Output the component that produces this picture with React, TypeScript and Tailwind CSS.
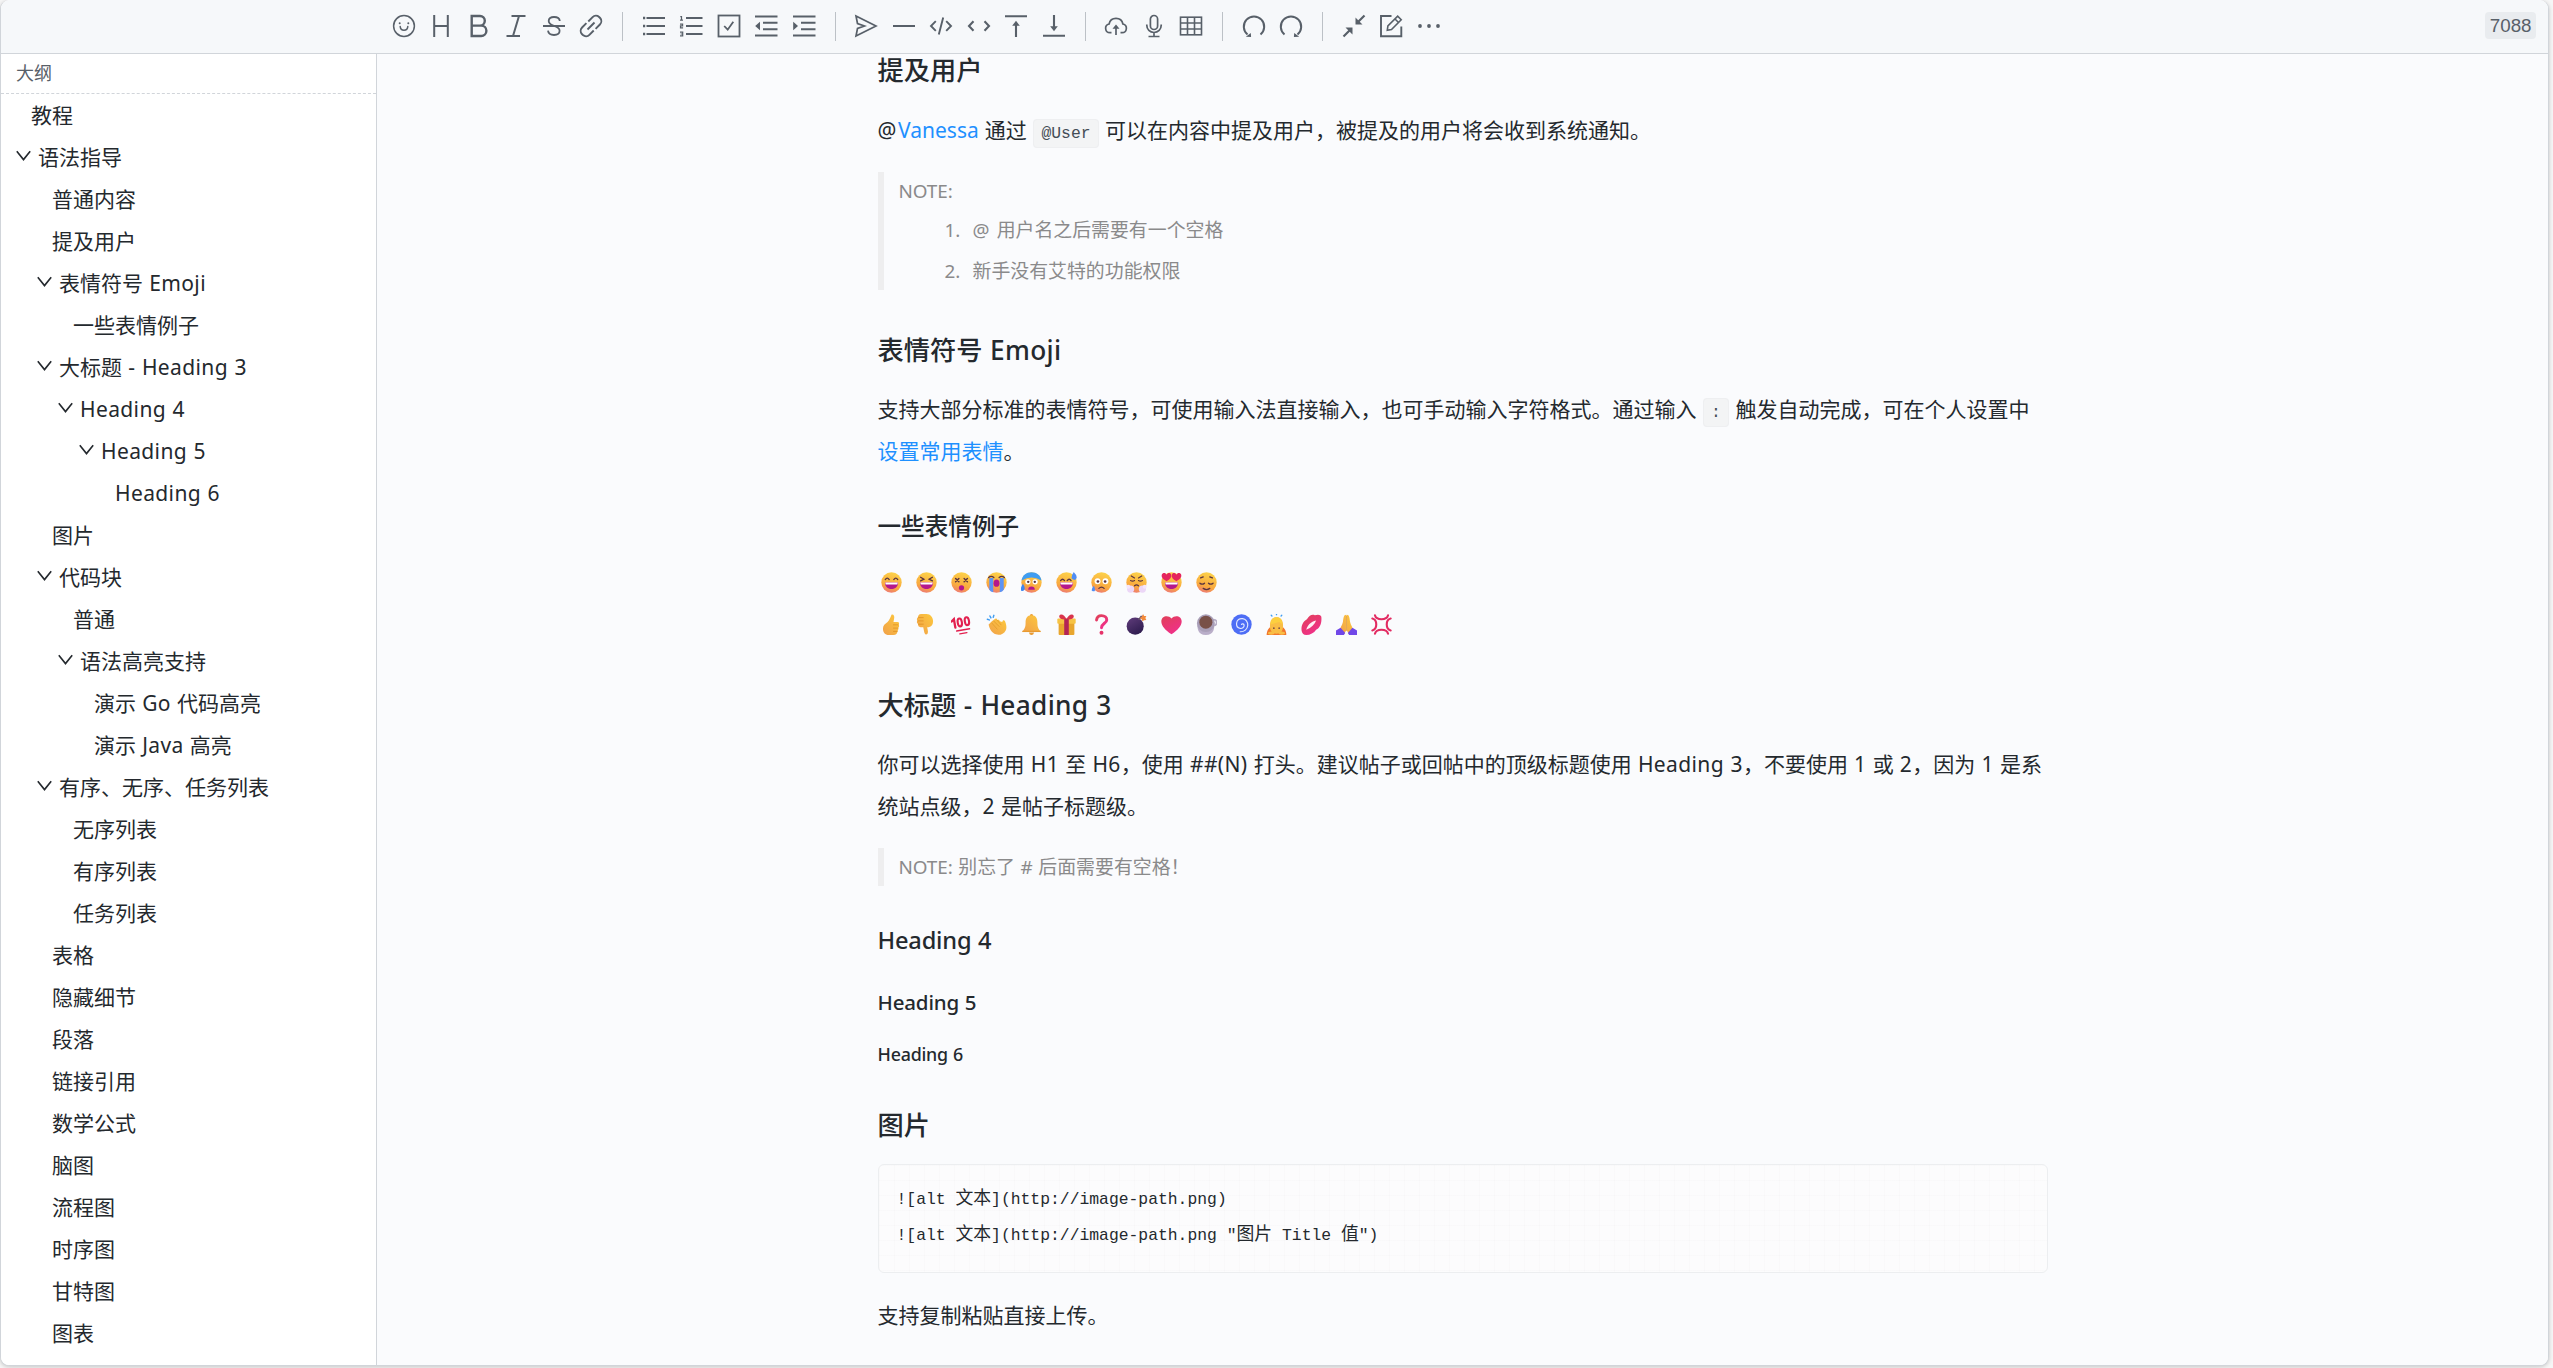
import React from "react";

/* ---------- text helpers ---------- */

// Latin runs carry their own tracking, separate from the CJK text around them.
function T({ children, latin = "tracking-[0.018em]" }: { children: string; latin?: string }) {
  const parts = children.split(/([\x21-\x7e][\x20-\x7e]*[\x21-\x7e]|[\x21-\x7e])/);
  return (
    <>
      {parts.map((p, i) =>
        i % 2 ? (
          <span key={i} className={latin}>
            {p}
          </span>
        ) : (
          p
        )
      )}
    </>
  );
}

/* ---------- toolbar icons ---------- */

function Icon({ children, w = 1.6 }: { children: React.ReactNode; w?: number }) {
  return (
    <span className="flex h-full w-[37.5px] shrink-0 items-center justify-center">
      <svg
        width="24"
        height="24"
        viewBox="0 0 24 24"
        fill="none"
        stroke="currentColor"
        strokeWidth={w}
        strokeLinecap="butt"
        strokeLinejoin="miter"
      >
        {children}
      </svg>
    </span>
  );
}

const Divider = () => (
  <span className="flex h-full w-[25px] shrink-0 items-center justify-center">
    <span className="h-[29px] w-px bg-[#bcc1c6]" />
  </span>
);

const EmojiIcon = () => (
  <Icon w={1.5}>
    <circle cx="12" cy="12" r="10.4" />
    <path d="M8.2 12.6c.2 2.2 1.8 3.6 3.8 3.6s3.6-1.4 3.8-3.6" strokeLinecap="round" />
    <circle cx="7.7" cy="9.3" r="1" fill="currentColor" stroke="none" />
    <circle cx="16.3" cy="9.3" r="1" fill="currentColor" stroke="none" />
  </Icon>
);
const HeadingIcon = () => (
  <Icon w={2}>
    <path d="M5.2 1v22M18.8 1v22M5.2 12h13.6" />
  </Icon>
);
const BoldIcon = () => (
  <Icon w={2.4}>
    <path d="M4.7 2h8.3a4.8 4.8 0 0 1 0 9.6H4.7zM4.7 11.6h9.5a5.1 5.1 0 0 1 0 10.4H4.7z" />
  </Icon>
);
const ItalicIcon = () => (
  <Icon w={2}>
    <path d="M7.5 2h14M2.5 22h13.5M15 2L9 22" />
  </Icon>
);
const StrikeIcon = () => (
  <Icon w={1.8}>
    <path d="M1 12h22M17.8 7c-.2-2.4-2.4-4-5.8-4C8.600 3 6.700 4.600 6.700 6.900c0 3 3 4 5.300 5.100 3.500 1 5.600 2.100 5.600 4.800 0 2.600-2.100 4.200-5.600 4.200-3.600 0-5.700-1.700-6-4.300" />
  </Icon>
);
const LinkIcon = () => (
  <Icon w={1.9}>
    <path d="M9.300 7.500l4.300-4.300c1.800-1.800 4.600-1.900 6.500-.2l1 1c1.700 1.900 1.600 4.700-.2 6.500l-4.300 4.300M14.700 16.500l-4.300 4.300c-1.800 1.800-4.600 1.900-6.500.2l-1-1c-1.700-1.900-1.600-4.700.2-6.500l4.300-4.300M8.500 15.500l7-7" />
  </Icon>
);
const ListIcon = () => (
  <Icon w={2}>
    <path d="M4.500 4H23M4.500 12H23M4.500 20H23" />
    <path d="M1 4h2.200M1 12h2.200M1 20h2.200" strokeWidth="2.400" />
  </Icon>
);
const OrderedIcon = () => (
  <Icon w={1.900}>
    <path d="M7 4h16.500M7 12h16.500M7 20h16.500" />
    <path d="M1.300 2.600h1.200V6M1 6.200h3M1 10.200h2.600v1.700H1.500v2h2.600M1 18.200h2.700v3.600H1M1.600 20h2" strokeWidth="1.200" />
  </Icon>
);
const CheckIcon = () => (
  <Icon w={1.800}>
    <rect x="1.500" y="1.500" width="21" height="21" />
    <path d="M7.200 12l3.500 3.700 5.600-8" />
  </Icon>
);
const OutdentIcon = () => (
  <Icon w={2}>
    <path d="M1 2.500h22.500M9 8.800h14.500M9 15.200h14.500M1 21.500h22.500" />
    <path d="M6 7.800v8.400L1.200 12z" fill="currentColor" stroke="none" />
  </Icon>
);
const IndentIcon = () => (
  <Icon w={2}>
    <path d="M1 2.500h22.500M9 8.800h14.500M9 15.200h14.500M1 21.500h22.500" />
    <path d="M1.200 7.800v8.400L6 12z" fill="currentColor" stroke="none" />
  </Icon>
);
const SendIcon = () => (
  <Icon w={1.700}>
    <path d="M2 2l20 10L2 22l1.500-7.500L10.500 12l-7-2.500z" />
  </Icon>
);
const LineIcon = () => (
  <Icon w={2}>
    <path d="M1 12h22" />
  </Icon>
);
const CodeIcon = () => (
  <Icon w={1.900}>
    <path d="M6.800 7.200L2 12l4.800 4.800M17.200 7.200L22 12l-4.800 4.800M14.200 3.500L9.800 20.500" />
  </Icon>
);
const InlineCodeIcon = () => (
  <Icon w={2.100}>
    <path d="M6.500 7.200L2 12l4.500 4.800M17.500 7.200L22 12l-4.500 4.800" />
  </Icon>
);
const BeforeIcon = () => (
  <Icon w={2.100}>
    <path d="M1 2.200h22M12 23V9" />
    <path d="M12 6.800l3.800 5H8.200z" fill="currentColor" stroke="none" />
  </Icon>
);
const AfterIcon = () => (
  <Icon w={2.100}>
    <path d="M1 21.800h22M12 1v14" />
    <path d="M12 17.200l3.800-5H8.200z" fill="currentColor" stroke="none" />
  </Icon>
);
const UploadIcon = () => (
  <Icon w={1.700}>
    <path d="M7.500 18.700H6a4.400 4.400 0 0 1-.9-8.700C5.800 6.400 8.500 4.300 12 4.300s6.200 2.100 6.900 5.700a4.400 4.400 0 0 1-.9 8.700h-1.500M12 21v-8" />
    <path d="M12 10.500l3.500 4.300h-7z" fill="currentColor" stroke="none" />
  </Icon>
);
const MicIcon = () => (
  <Icon w={1.700}>
    <rect x="8.400" y="1.500" width="7.200" height="14" rx="3.600" />
    <path d="M4.800 10.500v.7c0 4.300 3.100 7.300 7.200 7.300s7.200-3 7.200-7.300v-.7M12 18.500v4M6.500 22.500h11" />
  </Icon>
);
const TableIcon = () => (
  <Icon w={1.600}>
    <rect x="1.500" y="3.200" width="21" height="17.600" />
    <path d="M1.500 9h21M1.500 15h21M8.500 3.200v17.600M15.500 3.200v17.600" />
  </Icon>
);
const UndoIcon = () => (
  <Icon w={2}>
    <path d="M18.500 20.500a10.200 10.200 0 1 0-13 0" />
    <path d="M3.800 22.800l5-3.800.3 4z" fill="currentColor" stroke="none" />
  </Icon>
);
const RedoIcon = () => (
  <Icon w={2}>
    <path d="M5.500 20.500a10.200 10.200 0 1 1 13 0" />
    <path d="M20.200 22.800l-5-3.800-.3 4z" fill="currentColor" stroke="none" />
  </Icon>
);
const FullscreenIcon = () => (
  <Icon w={2.200}>
    <path d="M22.500 1.500L16.500 7.500M1.500 22.500l6-6" />
    <path d="M13.500 3.500v7h7zM10.500 20.500v-7h-7z" fill="currentColor" stroke="none" />
  </Icon>
);
const EditIcon = () => (
  <Icon w={1.900}>
    <path d="M12.500 2H2v20.300h20.300V12.500" />
    <path d="M8.300 16.200l.6-4.200L18.700 2.200l3.500 3.500-9.700 9.800zM16 5l3.300 3.300" strokeWidth="1.600" />
  </Icon>
);
const MoreIcon = () => (
  <Icon>
    <circle cx="3" cy="12" r="1.900" fill="currentColor" stroke="none" />
    <circle cx="12" cy="12" r="1.900" fill="currentColor" stroke="none" />
    <circle cx="21" cy="12" r="1.900" fill="currentColor" stroke="none" />
  </Icon>
);

/* ---------- outline ---------- */

type Item = [depth: number, open: boolean, label: string];

const outline: Item[] = [
  [0, false, "教程"],
  [0, true, "语法指导"],
  [1, false, "普通内容"],
  [1, false, "提及用户"],
  [1, true, "表情符号 Emoji"],
  [2, false, "一些表情例子"],
  [1, true, "大标题 - Heading 3"],
  [2, true, "Heading 4"],
  [3, true, "Heading 5"],
  [4, false, "Heading 6"],
  [1, false, "图片"],
  [1, true, "代码块"],
  [2, false, "普通"],
  [2, true, "语法高亮支持"],
  [3, false, "演示 Go 代码高亮"],
  [3, false, "演示 Java 高亮"],
  [1, true, "有序、无序、任务列表"],
  [2, false, "无序列表"],
  [2, false, "有序列表"],
  [2, false, "任务列表"],
  [1, false, "表格"],
  [1, false, "隐藏细节"],
  [1, false, "段落"],
  [1, false, "链接引用"],
  [1, false, "数学公式"],
  [1, false, "脑图"],
  [1, false, "流程图"],
  [1, false, "时序图"],
  [1, false, "甘特图"],
  [1, false, "图表"],
];

const indents = ["pl-0", "pl-[21px]", "pl-[42px]", "pl-[63px]", "pl-[84px]"];

function Outline() {
  return (
    <aside className="flex w-[376px] shrink-0 flex-col border-r border-[#d1d5da] bg-white">
      <div className="h-[40px] border-b border-dashed border-[#d1d5da] pl-[15px] text-[18px] leading-[38px] text-[#586069]">
        大纲
      </div>
      <ul className="text-[21px] leading-[42px]">
        {outline.map(([depth, open, label], i) => (
          <li key={i} className={indents[depth]}>
            <div className={open ? "flex h-[42px] items-center pl-[15px]" : "flex h-[42px] items-center pl-[30px]"}>
              {open && (
                <svg width="15" height="11" viewBox="0 0 15 11" className="mr-[7px] mb-[3px]" fill="none" stroke="#24292e" strokeWidth="1.600">
                  <path d="M.8 1.200L7.500 9.600 14.200 1.200" />
                </svg>
              )}
              <span className="whitespace-nowrap">
                <T>{label}</T>
              </span>
            </div>
          </li>
        ))}
      </ul>
    </aside>
  );
}

/* ---------- emoji ---------- */

function E({ children }: { children: React.ReactNode }) {
  return (
    <svg width="21" height="21" viewBox="0 0 32 32" fill="none" strokeLinecap="round">
      {children}
    </svg>
  );
}
const Face = () => <circle cx="16" cy="16" r="15.500" fill="url(#face)" />;
const Grin = () => (
  <>
    <path d="M6 16h20c0 6-4 10-10 10S6 22 6 16z" fill="#b5178c" />
    <path d="M6.500 16h19l-.6 3H7.100z" fill="#fff" />
  </>
);
const brown = "#5a3440";

const faces: React.ReactNode[] = [
  <>
    <Face />
    <path d="M6.500 11.500q3-4.500 6 0M19.500 11.500q3-4.500 6 0" stroke={brown} strokeWidth="2" />
    <Grin />
  </>,
  <>
    <Face />
    <path d="M7 8l5 3-5 2.500M25 8l-5 3 5 2.500" stroke={brown} strokeWidth="2" />
    <Grin />
  </>,
  <>
    <Face />
    <path d="M7 10l5 5M12 10l-5 5M20 10l5 5M25 10l-5 5" stroke={brown} strokeWidth="2.200" />
    <circle cx="16" cy="24" r="4" fill="#b5178c" />
  </>,
  <>
    <Face />
    <path d="M4 8.500q4-3.500 8 0M20 8.500q4-3.500 8 0" stroke={brown} strokeWidth="2" />
    <path d="M5 9h6v22q-4-1-6-4zM21 9h6v18q-2 3-6 4z" fill="#5d93f5" />
    <ellipse cx="16" cy="17" rx="4.500" ry="5.500" fill="#b5178c" />
  </>,
  <>
    <Face />
    <path d="M1 13C2 5 8 .500 16 .500S30 5 31 13Q16 4 1 13z" fill="#3f9df2" />
    <circle cx="10.500" cy="15" r="4" fill="#fff" />
    <circle cx="21.500" cy="15" r="4" fill="#fff" />
    <circle cx="11" cy="15" r="1.800" fill={brown} />
    <circle cx="21" cy="15" r="1.800" fill={brown} />
    <path d="M11 27q0-5 5-5t5 5z" fill="#b5178c" />
    <path d="M3 18q4 6 2 9t-5 1q-1-5 3-10z" fill="#3f86f0" />
  </>,
  <>
    <Face />
    <path d="M7 13q3-4 6 0M17 13q3-4 6 0" stroke={brown} strokeWidth="2" />
    <Grin />
    <path d="M27 0q6 6 4 10t-7 0q-1-4 3-10z" fill="#4f8df5" />
  </>,
  <>
    <Face />
    <circle cx="10" cy="14" r="4.500" fill="#fff" />
    <circle cx="22" cy="14" r="4.500" fill="#fff" />
    <circle cx="10.500" cy="14.500" r="2" fill={brown} />
    <circle cx="21.500" cy="14.500" r="2" fill={brown} />
    <path d="M12 25q4-4 8 0" stroke={brown} strokeWidth="2" />
    <path d="M4 21q3 4 2 7t-5 0q0-3 3-7z" fill="#4f8df5" />
  </>,
  <>
    <Face />
    <path d="M8 6l5 3M24 6l-5 3M7 13q3 2 6 0M19 13q3 2 6 0M13 21q3-3 6 0" stroke={brown} strokeWidth="1.800" />
    <circle cx="7" cy="26" r="5.500" fill="#ecd7f7" />
    <circle cx="25" cy="26" r="5.500" fill="#ecd7f7" />
    <circle cx="3.500" cy="22.500" r="3" fill="#f5e6fb" />
    <circle cx="28.500" cy="22.500" r="3" fill="#f5e6fb" />
  </>,
  <>
    <Face />
    <path d="M8.500 14C2 11 0 7 1.500 3.500 3 1 7 .500 8.500 4c2-3.500 6-3 7 0 1 4-1.500 7-7 10zM23.500 14c6.500-3 8.500-7 7-10.500C29 1 25 .500 23.500 4c-2-3.500-6-3-7 0-1 4 1.500 7 7 10z" fill="#e5245e" />
    <Grin />
  </>,
  <>
    <Face />
    <path d="M6 17q3.500 3 7 0M19 17q3.500 3 7 0M11 25q5 3.500 10 0M7 9l4-1.500M25 9l-4-1.500" stroke={brown} strokeWidth="2" />
  </>,
];

const symbols: React.ReactNode[] = [
  // thumbs up
  <>
    <path d="M16 1c3-1 5 2 4 6l-1 5h6c3 0 3 3 2 4 1 2 1 4-1 5 1 2 0 4-1 5 0 4-2 6-6 6h-7C6 32 3 28 3 22c0-5 3-7 7-10 3-3 4-6 6-11z" fill="url(#skin)" />
    <path d="M19 16.500h7M19 21.500h7M19 26.500h6" stroke="#d98a1d" strokeWidth="1" />
  </>,
  // thumbs down
  <>
    <path d="M14 31c3 1 5-2 4-6l-1-5h2c5-1 7-4 7-9 0-6-4-11-10-11H8C4 0 3 3 3 5c-2 1-2 4-1 5-1 2-1 4 1 5 0 3 1 5 4 5h4c1 3 1 8 3 11z" fill="url(#skin)" />
    <path d="M4 5.500h7M3 10.500h8M4 15.500h7" stroke="#d98a1d" strokeWidth="1" />
  </>,
  // hundred
  <g stroke="#e2204f" transform="rotate(-10 16 16)">
    <path d="M2 9l4-3v13" strokeWidth="3.500" />
    <ellipse cx="14" cy="12.500" rx="3.200" ry="6" strokeWidth="3.200" />
    <ellipse cx="25" cy="12.500" rx="3.200" ry="6" strokeWidth="3.200" />
    <path d="M7 24.500h20M11 29.500h11" strokeWidth="2" />
  </g>,
  // clap
  <>
    <path d="M4 16l5-5 4-3c2-2 4-1 4 1 2-1 4 0 4 2l4 1c0-3 3-3 4-1 2 5 3 10 1 14-3 6-10 8-15 6C9 29 5 22 4 16z" fill="url(#skin)" />
    <path d="M12 11l8 8M9 14l8 9M17 9.500l6 7" stroke="#e09a2a" strokeWidth="1.200" />
    <path d="M2 8l3 1M6 3l1.500 3M12 2l-1 3" stroke="#3f9df2" strokeWidth="2.200" />
  </>,
  // bell
  <>
    <circle cx="16" cy="2.500" r="2.500" fill="#e89a31" />
    <path d="M16 2c7 0 9 5 9 11 0 7 1 9 5 14H2c4-5 5-7 5-14C7 7 9 2 16 2z" fill="url(#skin)" />
    <path d="M2 25.500h28v2H2z" fill="#e89a31" />
    <path d="M12 28h8q-1 4-4 4t-4-4z" fill="#e89a31" />
  </>,
  // gift
  <>
    <rect x="4" y="13" width="24" height="19" rx="1.500" fill="#e8a62e" />
    <rect x="2" y="7" width="28" height="8" rx="1.500" fill="#f6c344" />
    <path d="M12.500 7h7v25h-7z" fill="#b32456" />
    <path d="M16 8C10 9 4 7 5 3s8-3 11 5zM16 8c6 1 12-1 11-5s-8-3-11 5z" fill="#d9344c" />
  </>,
  // question
  <>
    <path d="M8.500 9C9 4 12 2.500 16 2.500c5 0 8 3 8 6.500 0 5-8 5.500-8 12" stroke="url(#red)" strokeWidth="4.500" />
    <circle cx="16" cy="28.500" r="3" fill="#e6336a" />
  </>,
  // bomb
  <>
    <circle cx="14" cy="18.500" r="13" fill="url(#bomb)" />
    <path d="M20 8l3-4h3" stroke="#68536b" strokeWidth="2.500" />
    <path d="M26 0l1.500 3L31 3l-1.500 3 1.500 3-3.500.500L25 11l-1-3-3-2 3-2z" fill="#f28a3c" />
  </>,
  // heart
  <path d="M16 31C6 24 .500 18 .500 11 .500 3 11 .500 16 7 21 .500 31.500 3 31.500 11c0 7-5.500 13-15.500 20z" fill="url(#red)" />,
  // coffee
  <>
    <circle cx="27" cy="13" r="4.500" stroke="#b8afc7" strokeWidth="2.500" />
    <path d="M2 12c0 10 0 19 13 20 13-1 13-10 13-20z" fill="#b9aec9" />
    <circle cx="15" cy="14" r="13.500" fill="#a99fb8" />
    <circle cx="15" cy="12.500" r="10" fill="#785048" />
  </>,
  // cyclone
  <>
    <circle cx="16" cy="16" r="15.500" fill="#4d6df5" />
    <path d="M16 16c1-2 4-1 4 1.500 0 3-3 5-6 4.500-4-.500-6-4-5.500-8C9 9 13 6.500 17.500 7c5 .500 8.500 5 8 10.500C25 23 20 27.500 14 27" stroke="#dfe6ff" strokeWidth="1.800" />
  </>,
  // bowing person
  <>
    <path d="M1 32c0-6 3-12 8-13h14c5 1 8 7 8 13z" fill="#f2762c" />
    <path d="M6 18C6 9 10 5 16 5s10 4 10 13-4 12-10 12S6 27 6 18z" fill="#f9bd45" />
    <path d="M7 16C7 9 10 5 16 5s9 4 9 11l-5-4z" fill="#fccf3f" />
    <path d="M12 21v1M20 21v1" stroke={brown} strokeWidth="2" />
    <ellipse cx="8" cy="29" rx="5" ry="2.500" fill="#f9bd45" />
    <ellipse cx="24" cy="29" rx="5" ry="2.500" fill="#f9bd45" />
    <path d="M8 2l1 1M16 0v1M24 2l-1 1" stroke="#3f9df2" strokeWidth="2" />
  </>,
  // kiss
  <>
    <path d="M1 26C0 17 3 12 9 8c4-6 8-8 12-6 5-2 9-1 10 2 1 10-2 17-8 20-3 5-9 8-15 8-4 0-6-2-7-6z" fill="url(#red)" />
    <path d="M8 24c2-7 7-12 15-14-2 6-7 11-15 14z" fill="#fff0f6" />
  </>,
  // folded hands
  <>
    <path d="M15.500 1c-4 0-4 5-5 11-1 5-4 8-4 11l6 7 3-5zM16.500 1c4 0 4 5 5 11 1 5 4 8 4 11l-6 7-3-5z" fill="url(#skin)" />
    <path d="M16 3v22" stroke="#d98a1d" strokeWidth="1" />
    <path d="M0 25l7-4 7 8-2 3H0zM32 25l-7-4-7 8 2 3h12z" fill="#7047e8" />
  </>,
  // anger
  <g stroke="#e22b62" strokeWidth="3.200">
    <path d="M6 2c1 4 5 6 10 6s9-2 10-6M6 30c1-4 5-6 10-6s9 2 10 6M2 7c4 1 6 4 6 9s-2 8-6 9M30 7c-4 1-6 4-6 9s2 8 6 9" />
  </g>,
];

const EmojiRow = ({ items }: { items: React.ReactNode[] }) => (
  <div className="flex h-[42px] gap-[14px] pt-[11px] pl-[3.500px]">
    {items.map((e, i) => (
      <E key={i}>{e}</E>
    ))}
  </div>
);

const Defs = () => (
  <svg width="0" height="0" className="absolute">
    <defs>
      <linearGradient id="face" x1=".7" y1="0" x2=".4" y2="1">
        <stop offset="0" stopColor="#fcd34a" />
        <stop offset=".7" stopColor="#f9a93f" />
        <stop offset="1" stopColor="#ee7c72" />
      </linearGradient>
      <linearGradient id="skin" x1="1" y1="0" x2="0" y2="1">
        <stop offset="0" stopColor="#fdc93d" />
        <stop offset="1" stopColor="#f0a04a" />
      </linearGradient>
      <linearGradient id="red" x1="0" y1="0" x2=".6" y2="1">
        <stop offset="0" stopColor="#e04058" />
        <stop offset="1" stopColor="#f0308a" />
      </linearGradient>
      <linearGradient id="bomb" x1=".2" y1="0" x2=".8" y2="1">
        <stop offset="0" stopColor="#5c3a78" />
        <stop offset="1" stopColor="#2b1a4c" />
      </linearGradient>
    </defs>
  </svg>
);

/* ---------- article ---------- */

const H3 = ({ children, className }: { children: string; className: string }) => (
  <h3 className={`text-[26.25px] font-medium ${className}`}>
    <T latin="tracking-[0.012em]">{children}</T>
  </h3>
);

const Code = ({ children }: { children: string }) => (
  <code className="rounded-[4px] border border-[#eeeff1] bg-[#f3f4f5] px-[7.500px] py-[4px] font-['Liberation_Mono',monospace] text-[16.36px] leading-none text-[#444d56]">
    {children}
  </code>
);

const Cjk = ({ children }: { children: string }) => <span className="text-[17.85px] leading-none">{children}</span>;

function Article() {
  return (
    <main className="min-w-0 flex-1 overflow-hidden bg-[#fafbfd]">
      <article className="mx-auto w-[1170px] text-[21px] leading-[42px] whitespace-nowrap">
        <H3 className="leading-[33px]">提及用户</H3>

        <p className="mt-[22px] [word-spacing:0.03em]">
          <span className="tracking-[0.08em]">@</span>
          <a className="text-[#1e90ff]">Vanessa</a> 通过 <Code>@User</Code> 可以在内容中提及用户，被提及的用户将会收到系统通知。
        </p>

        <blockquote className="mt-[21px] h-[118px] border-l-[6px] border-[#eeeeef] pl-[15px] text-[18.900px] text-[#8a8a8b]">
          <p className="leading-[38px] tracking-[-0.005em]">NOTE:</p>
          <ol className="leading-[41px]">
            <li className="flex pl-[46px]">
              <span className="w-[28px]">1.</span>
              <span>
                <span className="tracking-[0.08em]">@</span> 用户名之后需要有一个空格
              </span>
            </li>
            <li className="flex pl-[46px]">
              <span className="w-[28px]">2.</span>
              <span>新手没有艾特的功能权限</span>
            </li>
          </ol>
        </blockquote>

        <H3 className="mt-[42px] leading-[36px]">表情符号 Emoji</H3>
        <p className="mt-[20px] [word-spacing:0.03em]">
          支持大部分标准的表情符号，可使用输入法直接输入，也可手动输入字符格式。通过输入 <Code>:</Code> 触发自动完成，可在个人设置中
          <br />
          <a className="text-[#1e90ff]">设置常用表情</a>。
        </p>

        <h4 className="mt-[38px] text-[23.625px] leading-[32px] font-medium">一些表情例子</h4>
        <div className="mt-[19px]">
          <EmojiRow items={faces} />
          <EmojiRow items={symbols} />
        </div>

        <H3 className="mt-[42px] leading-[36px]">大标题 - Heading 3</H3>
        <p className="mt-[20px]">
          <T>你可以选择使用 H1 至 H6，使用 ##(N) 打头。建议帖子或回帖中的顶级标题使用 Heading 3，不要使用 1 或 2，因为 1 是系</T>
          <br />
          <T>统站点级，2 是帖子标题级。</T>
        </p>

        <blockquote className="mt-[21px] h-[38px] border-l-[6px] border-[#eeeeef] pl-[15px] text-[18.900px] leading-[38px] text-[#8a8a8b]">
          <T latin="tracking-[-0.005em]">NOTE: 别忘了 # 后面需要有空格！</T>
        </blockquote>

        <h4 className="mt-[38px] text-[23.625px] leading-[32px] font-medium tracking-[-0.008em]">Heading 4</h4>
        <h5 className="mt-[32px] text-[20.500px] leading-[28px] font-medium tracking-[-0.008em]">Heading 5</h5>
        <h6 className="mt-[26px] text-[17.850px] leading-[24px] font-medium tracking-[-0.012em]">Heading 6</h6>

        <H3 className="mt-[41px] leading-[36px]">图片</H3>
        <pre className="mt-[21px] h-[109px] rounded-[6px] border border-[#eceef0] bg-[#fcfcfd] bg-[linear-gradient(90deg,rgba(60,10,30,0.012)_1px,transparent_1px),linear-gradient(rgba(60,10,30,0.012)_1px,transparent_1px)] bg-size-[15px_15px] px-[18px] pt-[17px] font-['Liberation_Mono','Noto_Sans_CJK_SC',monospace] text-[16.36px] leading-[36px] [word-spacing:0]">
          {"![alt "}
          <Cjk>文本</Cjk>
          {"](http://image-path.png)\n![alt "}
          <Cjk>文本</Cjk>
          {'](http://image-path.png "'}
          <Cjk>图片</Cjk>
          {" Title "}
          <Cjk>值</Cjk>
          {'")'}
        </pre>

        <p className="mt-[21px]">支持复制粘贴直接上传。</p>
      </article>
    </main>
  );
}

export default function App() {
  return (
    <div className="h-[1368px] w-[2553px] overflow-hidden bg-[#f6f6f6] font-['Noto_Sans','Noto_Sans_CJK_SC',sans-serif] [word-spacing:0.045em] text-[#24292e]">
      <Defs />
      <div className="flex h-[1366px] w-[2549px] flex-col overflow-hidden rounded-[9px] border border-t-0 border-[#d1d5da] bg-white shadow-[0_1px_4px_rgba(0,0,0,0.2)]">
        <header className="flex h-[54px] shrink-0 items-center border-b border-[#d1d5da] bg-[#f6f8fa] pr-3 pb-px pl-[384px] text-[#586069]">
          <EmojiIcon />
          <HeadingIcon />
          <BoldIcon />
          <ItalicIcon />
          <StrikeIcon />
          <LinkIcon />
          <Divider />
          <ListIcon />
          <OrderedIcon />
          <CheckIcon />
          <OutdentIcon />
          <IndentIcon />
          <Divider />
          <SendIcon />
          <LineIcon />
          <CodeIcon />
          <InlineCodeIcon />
          <BeforeIcon />
          <AfterIcon />
          <Divider />
          <UploadIcon />
          <MicIcon />
          <TableIcon />
          <Divider />
          <UndoIcon />
          <RedoIcon />
          <Divider />
          <FullscreenIcon />
          <EditIcon />
          <MoreIcon />
          <span className="mt-[-1px] ml-auto h-[27px] rounded-[4px] bg-[#e9ecef] px-[4.500px] font-['Liberation_Sans',sans-serif] text-[18.750px] leading-[28px]">
            7088
          </span>
        </header>
        <div className="flex min-h-0 flex-1">
          <Outline />
          <Article />
        </div>
      </div>
    </div>
  );
}
